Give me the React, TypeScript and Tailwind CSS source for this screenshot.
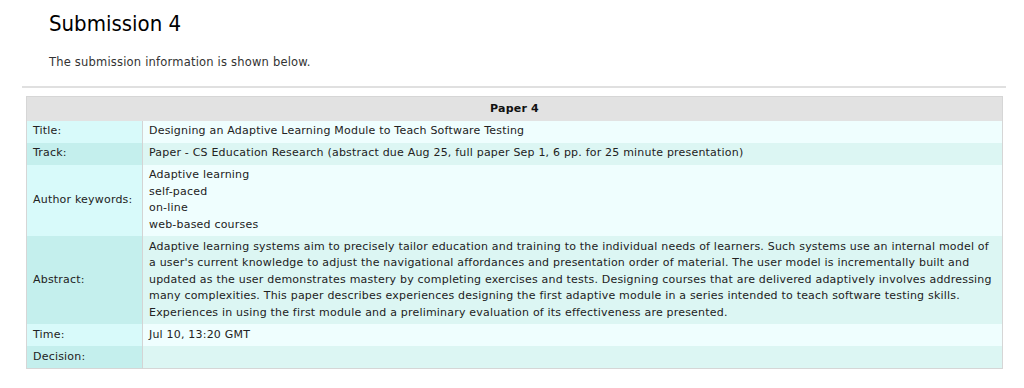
const rows: { label: string; value: React.ReactNode }[] = [
  {
    label: 'Title:',
    value: 'Designing an Adaptive Learning Module to Teach Software Testing',
  },
  {
    label: 'Track:',
    value:
      'Paper - CS Education Research (abstract due Aug 25, full paper Sep 1, 6 pp. for 25 minute presentation)',
  },
  {
    label: 'Author keywords:',
    value: (
      <>
        Adaptive learning
        <br />
        self-paced
        <br />
        on-line
        <br />
        web-based courses
      </>
    ),
  },
  {
    label: 'Abstract:',
    value:
      "Adaptive learning systems aim to precisely tailor education and training to the individual needs of learners. Such systems use an internal model of a user's current knowledge to adjust the navigational affordances and presentation order of material. The user model is incrementally built and updated as the user demonstrates mastery by completing exercises and tests. Designing courses that are delivered adaptively involves addressing many complexities. This paper describes experiences designing the first adaptive module in a series intended to teach software testing skills. Experiences in using the first module and a preliminary evaluation of its effectiveness are presented.",
  },
  { label: 'Time:', value: 'Jul 10, 13:20 GMT' },
  { label: 'Decision:', value: '' },
]

export default function App() {
  return (
    <div className="min-h-[388px] bg-white font-['DejaVu_Sans',Verdana,sans-serif] text-[#222]">
      <div className="pl-[49px] pt-[9px]">
        <h1 className="font-['DejaVu_Sans_Condensed','DejaVu_Sans',sans-serif] text-[22px] leading-[30px] text-black">
          Submission 4
        </h1>
        <p className="mt-[15px] text-[11.5px] leading-[16px] tracking-[0.2px] text-[#333]">
          The submission information is shown below.
        </p>
      </div>
      <hr className="mx-[22px] mt-[16px] w-[984px] border-t-2 border-[#e0e0e0]" />
      <table className="mt-[8px] ml-[26px] w-[977px] border-collapse border border-[#d6d6d6] text-[11px] leading-[16.5px] tracking-[0.2px]">
        <thead>
          <tr>
            <th
              colSpan={2}
              className="h-[24px] bg-[#e2e2e2] py-0 text-center font-bold text-[#111]"
            >
              Paper 4
            </th>
          </tr>
        </thead>
        <tbody>
          {rows.map((r, i) => (
            <tr key={r.label}>
              <td
                className={`w-[116px] border-r border-[#d4d4d4] px-[6px] py-[2.75px] align-middle ${
                  i % 2 === 0 ? 'bg-[#d8fafa]' : 'bg-[#c4efed]'
                }`}
              >
                {r.label}
              </td>
              <td
                className={`px-[6px] py-[2.75px] align-top ${
                  i % 2 === 0 ? 'bg-[#effefe]' : 'bg-[#dcf6f3]'
                }`}
              >
                {r.value}
                {r.value === '' && <span>&nbsp;</span>}
              </td>
            </tr>
          ))}
        </tbody>
      </table>
    </div>
  )
}
